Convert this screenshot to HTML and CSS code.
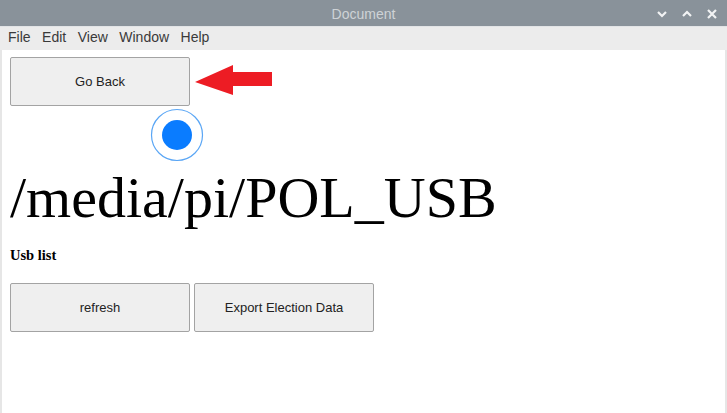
FILE: index.html
```html
<!DOCTYPE html>
<html>
<head>
<meta charset="utf-8">
<title>Document</title>
<link rel="stylesheet" href="styles.css">
</head>
<body>
<div class="window">
  <div class="titlebar">
    <span></span>
    <span class="title">Document</span>
    <div class="controls">
      <svg class="ctl" width="12" height="10" viewBox="0 0 12 10"><path d="M2 3 L6 7 L10 3" fill="none" stroke="#f2f3f4" stroke-width="2.2"/></svg>
      <svg class="ctl" width="12" height="10" viewBox="0 0 12 10"><path d="M2 7 L6 3 L10 7" fill="none" stroke="#f2f3f4" stroke-width="2.2"/></svg>
      <svg class="ctl" width="12" height="12" viewBox="0 0 12 12"><path d="M2 2 L10 10 M10 2 L2 10" fill="none" stroke="#f2f3f4" stroke-width="2.2"/></svg>
    </div>
  </div>
  <div class="menubar">
    <span class="menu-item">File</span>
    <span class="menu-item">Edit</span>
    <span class="menu-item">View</span>
    <span class="menu-item">Window</span>
    <span class="menu-item">Help</span>
  </div>
  <div class="content">
    <div class="nav-row">
      <button class="btn">Go Back</button>
      <svg class="arrow" width="77" height="34" viewBox="0 0 77 34"><polygon points="0,17 38,0 38,7 77,7 77,21 38,21 38,30" fill="#ed1c24"/></svg>
    </div>
    <svg class="spinner" width="54" height="54" viewBox="0 0 54 54">
      <circle cx="27" cy="27" r="25.5" fill="none" stroke="#5aa6f5" stroke-width="1.2"/>
      <circle cx="27" cy="27" r="15" fill="#0a7cff"/>
    </svg>
    <h1 class="path">/media/pi/POL_USB</h1>
    <div class="label">Usb list</div>
    <div class="actions">
      <button class="btn">refresh</button>
      <button class="btn">Export Election Data</button>
    </div>
  </div>
</div>
</body>
</html>
```
FILE: styles.css
```css
html, body {
  margin: 0;
  padding: 0;
  background: #ffffff;
}
.window {
  width: 727px;
  height: 413px;
  display: flex;
  flex-direction: column;
  overflow: hidden;
}
.titlebar {
  height: 26px;
  padding-top: 2px;
  box-sizing: border-box;
  background: #89929a;
  display: grid;
  grid-template-columns: 1fr auto 1fr;
  align-items: center;
  font-family: "Liberation Sans", Arial, sans-serif;
  font-size: 14px;
}
.title {
  color: #ced2d6;
}
.controls {
  display: flex;
  justify-content: flex-end;
  align-items: center;
  gap: 13px;
  padding-right: 9px;
}
.ctl {
  display: block;
}
.menubar {
  height: 24px;
  box-sizing: border-box;
  padding-bottom: 3px;
  background: #ececec;
  border-top: 1px solid #e2e4e6;
  display: flex;
  align-items: center;
  gap: 11.5px;
  padding-left: 8px;
  font-family: "Liberation Sans", Arial, sans-serif;
  font-size: 14px;
  color: #3a3a3a;
}
.content {
  flex: 1;
  border-left: 2px solid #e6e6e6;
  border-right: 2px solid #e6e6e6;
  padding: 7px 8px 0 8px;
}
.nav-row {
  display: flex;
  align-items: center;
  gap: 5px;
}
.btn {
  width: 180px;
  height: 49px;
  box-sizing: border-box;
  background: #efefef;
  border: 1px solid #a3a3a3;
  border-radius: 2px;
  font-family: "Liberation Sans", Arial, sans-serif;
  font-size: 13px;
  color: #222;
  padding: 0;
}
.arrow {
  display: block;
}
.spinner {
  display: block;
  margin: 2px 0 0 140px;
}
.path {
  margin: 3px 0 0 0;
  font-family: "Liberation Serif", "Times New Roman", serif;
  font-weight: normal;
  font-size: 58px;
  line-height: 66px;
  color: #000;
  white-space: nowrap;
}
.label {
  margin-top: 16px;
  font-family: "Liberation Serif", "Times New Roman", serif;
  font-weight: bold;
  font-size: 14.5px;
  line-height: 16px;
  color: #000;
}
.actions {
  display: flex;
  gap: 4px;
  margin-top: 20px;
}
```
